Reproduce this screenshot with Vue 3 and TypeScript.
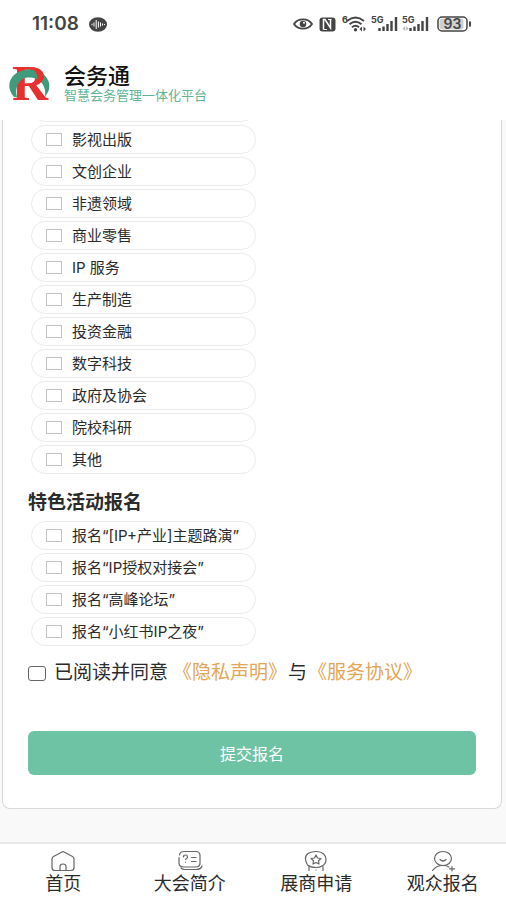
<script setup lang="ts">
import { ref } from 'vue'

const fields: string[] = [
  '影视出版', '文创企业', '非遗领域', '商业零售', 'IP 服务', '生产制造',
  '投资金融', '数字科技', '政府及协会', '院校科研', '其他',
]
const events: string[] = [
  '报名“[IP+产业]主题路演”', '报名“IP授权对接会”', '报名“高峰论坛”', '报名“小红书IP之夜”',
]
const tabs: { icon: string; label: string }[] = [
  { icon: 'home', label: '首页' },
  { icon: 'intro', label: '大会简介' },
  { icon: 'badge', label: '展商申请' },
  { icon: 'person', label: '观众报名' },
]
const pickedFields = ref<string[]>([])
const pickedEvents = ref<string[]>([])
const agreed = ref(false)
</script>

<template>
  <div class="page">
    <header class="top">
      <div class="status">
        <div class="status-left">
          <span class="clock">11:08</span>
          <svg width="18" height="15" viewBox="0 0 18 15">
            <ellipse cx="9" cy="7.5" rx="9" ry="7.3" fill="#444" />
            <path d="M3 6.8v1.4M5 5.5v4M7.200 3v9M9.400 4.5v6M11.500 5.5v4M13.500 6.5v2M15.500 7v1" stroke="#fff" stroke-width="1" />
          </svg>
        </div>
        <div class="status-right">
          <svg class="spaced" width="20" height="14" viewBox="0 0 20 14">
            <path d="M1 7C5 0.8 15 0.8 19 7C15 13.2 5 13.2 1 7Z" fill="none" stroke="#444" stroke-width="1.8" />
            <circle cx="10" cy="7" r="3.3" fill="#444" />
            <circle cx="11" cy="5.8" r="1" fill="#fff" />
          </svg>
          <svg class="spaced" width="17" height="15" viewBox="0 0 17 15">
            <rect x=".5" y=".5" width="16" height="14" rx="3" fill="#444" />
            <path d="M4.500 12.500V2.500H6L11.500 11V2.500" fill="none" stroke="#fff" stroke-width="1.500" />
            <path d="M4.500 12.500H8M9 2.500H12.500" fill="none" stroke="#fff" stroke-width="1" />
          </svg>
          <svg width="25" height="18" viewBox="0 -1 25 18">
            <text x="0" y="7" class="tiny">6</text>
            <g fill="none" stroke="#444" stroke-width="1.900">
              <path d="M5 5Q13.500 -1.800 22 5" />
              <path d="M7.500 8.200Q13.500 3.400 19.500 8.200" />
              <path d="M10 11.200Q13.500 8.500 17 11.200" />
            </g>
            <circle cx="13.500" cy="13.700" r="1.700" fill="#444" />
            <path d="M20 10.500V15.500L17.500 13ZM21.500 10.500V15.500L24 13Z" fill="#444" />
          </svg>
          <svg v-for="n in 2" :key="n" width="27" height="18" viewBox="0 -1 27 18">
            <text x="0" y="7" class="tiny">5G</text>
            <path v-if="n === 2" d="M3.200 10V15L.5 12.500ZM4.200 10V15L6.500 12.500Z" fill="#bbb" />
            <path d="M8.500 15V12M12.500 15V10.500M16.500 15V8M20.500 15V5M25 15V1" stroke="#444" stroke-width="2.400" />
          </svg>
          <svg class="battery" width="35" height="16" viewBox="0 0 35 16">
            <rect x="1" y="1" width="29" height="14" rx="4" fill="#fff" stroke="#444" stroke-width="1.500" />
            <rect x="2.500" y="2.500" width="24" height="11" rx="2.500" fill="#cfcfcf" />
            <path d="M33 5.500V10.500" stroke="#444" stroke-width="2" />
            <text x="15.500" y="12.700" text-anchor="middle" class="level">93</text>
          </svg>
        </div>
      </div>
      <div class="brand">
        <svg class="logo" width="44" height="38" viewBox="0 0 44 38">
          <text x="4" y="35" class="logo-letter">R</text>
          <path d="M6 32C-5 19 5 4.500 21 4.500C37 4.500 48 19 37 32C39 20 31 12.500 21 12.500C13 12.500 6 20 9 32Z" fill="#3f9b7b" />
          <path d="M22 2.200C38 1 41 17 27 19.500C31 15 31 7 22 2.200Z" fill="#e6322e" />
          <path d="M9.500 19H16V31H9.500ZM26 18L38 33H29L22 20Z" fill="#e6322e" />
        </svg>
        <div class="brand-text">
          <div class="name">会务通</div>
          <div class="slogan">智慧会务管理一体化平台</div>
        </div>
      </div>
    </header>

    <main class="content">
      <form class="card" @submit.prevent>
        <div class="options">
          <div class="option"></div>
          <label v-for="f in fields" :key="f" class="option">
            <input v-model="pickedFields" type="checkbox" :value="f" />
            <span>{{ f }}</span>
          </label>
        </div>
        <h2 class="heading">特色活动报名</h2>
        <div class="options">
          <label v-for="e in events" :key="e" class="option">
            <input v-model="pickedEvents" type="checkbox" :value="e" />
            <span>{{ e }}</span>
          </label>
        </div>
        <div class="agree">
          <div class="consent">
            <input id="agree" v-model="agreed" type="checkbox" />
            <label for="agree">已阅读并同意</label>
          </div>
          <a href="#privacy">《隐私声明》</a>
          <span>与</span>
          <a href="#terms">《服务协议》</a>
        </div>
        <button type="submit" class="submit">提交报名</button>
      </form>
    </main>

    <nav class="tabs">
      <a v-for="t in tabs" :key="t.label" href="#" class="tab">
        <svg width="26" height="22" viewBox="0 0 26 22" fill="none" stroke="#666" stroke-width="1.200" stroke-linecap="round" stroke-linejoin="round">
          <template v-if="t.icon === 'home'">
            <path d="M13 1.500L22.500 6.500Q24 7.300 24 9V17.500Q24 20.500 21 20.500H5Q2 20.500 2 17.500V9Q2 7.300 3.500 6.500Z" />
            <path d="M10 20V16.500Q10 14 13 14T16 16.500V20" />
          </template>
          <template v-else-if="t.icon === 'intro'">
            <path d="M2.500 5Q3 1.500 7 1.500H18.500Q23 1.500 23 5.500V13Q23 17 18.500 17H7Q2 17 2 13V7.500" />
            <path d="M4 18Q5.500 19.500 8 19.500H19Q24 19.500 25 16" />
            <path d="M6.500 7Q6.500 5 8.500 5T10.500 7Q10.500 8.300 8.500 9.500M8.500 12V12.200M14.500 7.500H19M14.500 11.500H19" />
          </template>
          <template v-else-if="t.icon === 'badge'">
            <path d="M4 14C-2 2 11 1.500 13 1.500C20 1.500 23 5.500 23 9.500C23 15.500 17 17.500 13 17.500C10 17.500 7 17 4.500 15" />
            <path d="M13 5L14.500 8L18 8.500L15.500 10.800L16 14L13 12.500L10 14L10.500 10.800L8 8.500L11.500 8ZM6 16.500V20.500M20 16.500V20.500M13 20H13.200" />
          </template>
          <template v-else>
            <ellipse cx="13" cy="8.500" rx="8.500" ry="7" />
            <path d="M10 9.500Q13 12.500 16 9.500M2.500 20.500Q6 15.500 13 15.500Q17 15.500 19 17M22 16.500V21M19.500 18.800H24.500" />
          </template>
        </svg>
        <span>{{ t.label }}</span>
      </a>
    </nav>
  </div>
</template>

<style>
body {
  margin: 0;
  background: #f9f9f9;
}
</style>

<style scoped>
* {
  box-sizing: border-box;
}
.page {
  display: flex;
  flex-direction: column;
  min-height: 100vh;
  background: #f9f9f9;
  color: #2b2b2b;
  font-family: Inter, "Noto Sans CJK SC", sans-serif;
}
.top {
  position: relative;
  z-index: 1;
  height: 120px;
  background: #fff;
}
.status {
  display: flex;
  justify-content: space-between;
  align-items: center;
  height: 48px;
  padding: 0 34px 0 32px;
}
.status-left,
.status-right {
  display: flex;
  align-items: center;
}
.status-left {
  gap: 10px;
}
.status-right {
  gap: 4px;
}
.clock {
  color: #444;
  font-size: 19px;
  font-weight: 600;
  line-height: 24px;
}
.tiny {
  fill: #444;
  font-size: 9px;
  font-weight: 700;
}
.spaced {
  margin-right: 2px;
}
.battery {
  margin-left: 4px;
}
.level {
  fill: #444;
  font-size: 14px;
  font-weight: 600;
}
.brand {
  display: flex;
  align-items: center;
  gap: 12px;
  padding: 17px 8px 0;
}
.logo {
  overflow: visible;
}
.logo-letter {
  fill: #e6322e;
  font-family: "Liberation Serif", serif;
  font-size: 50px;
  font-weight: 700;
}
.name {
  color: #111;
  font-size: 22px;
  font-weight: 500;
  line-height: 22px;
}
.slogan {
  color: #5fb595;
  font-size: 13px;
  line-height: 16px;
}
.content {
  flex: 1;
  padding: 0 4px 33px 2px;
}
.card {
  margin-top: -27px;
  padding: 0 25px 33px;
  background: #fff;
  border: 1px solid #d9d9d9;
  border-top: 0;
  border-radius: 0 0 8px 8px;
}
.options {
  display: flex;
  flex-direction: column;
  gap: 3px;
  padding-left: 3px;
}
.option {
  display: flex;
  align-items: center;
  gap: 10px;
  width: 225px;
  height: 29px;
  padding: 0 14px;
  border: 1px solid #ebebeb;
  border-radius: 15px;
  font-size: 15px;
  line-height: 20px;
  white-space: nowrap;
}
input {
  flex: none;
  appearance: none;
  margin: 0;
  background: #fff;
}
input:checked {
  background: #6fc3a5;
}
.option input {
  width: 16px;
  height: 13px;
  border: 1px solid #c4c4c4;
}
.heading {
  margin: 15px 0 4px;
  font-size: 19px;
  font-weight: 700;
  line-height: 28px;
}
.agree {
  display: flex;
  align-items: center;
  gap: 1px;
  margin: 13px 0 44px;
  font-size: 19px;
  line-height: 28px;
  white-space: nowrap;
}
.consent {
  display: flex;
  align-items: center;
  gap: 8px;
  margin-right: 4px;
}
.agree input {
  width: 18px;
  height: 15px;
  border: 1px solid #666;
  border-radius: 3px;
}
.agree a {
  color: #e3a657;
  text-decoration: none;
}
.submit {
  display: block;
  width: 100%;
  height: 44px;
  border: 0;
  border-radius: 6px;
  background: #6fc3a5;
  color: #fff;
  font-family: inherit;
  font-size: 16px;
}
.tabs {
  display: flex;
  padding: 6px 0 4px;
  border-top: 2px solid #e8e8e8;
  background: #fff;
}
.tab {
  flex: 1;
  display: flex;
  flex-direction: column;
  align-items: center;
  color: #2b2b2b;
  font-size: 18px;
  line-height: 24px;
  text-decoration: none;
}
</style>
